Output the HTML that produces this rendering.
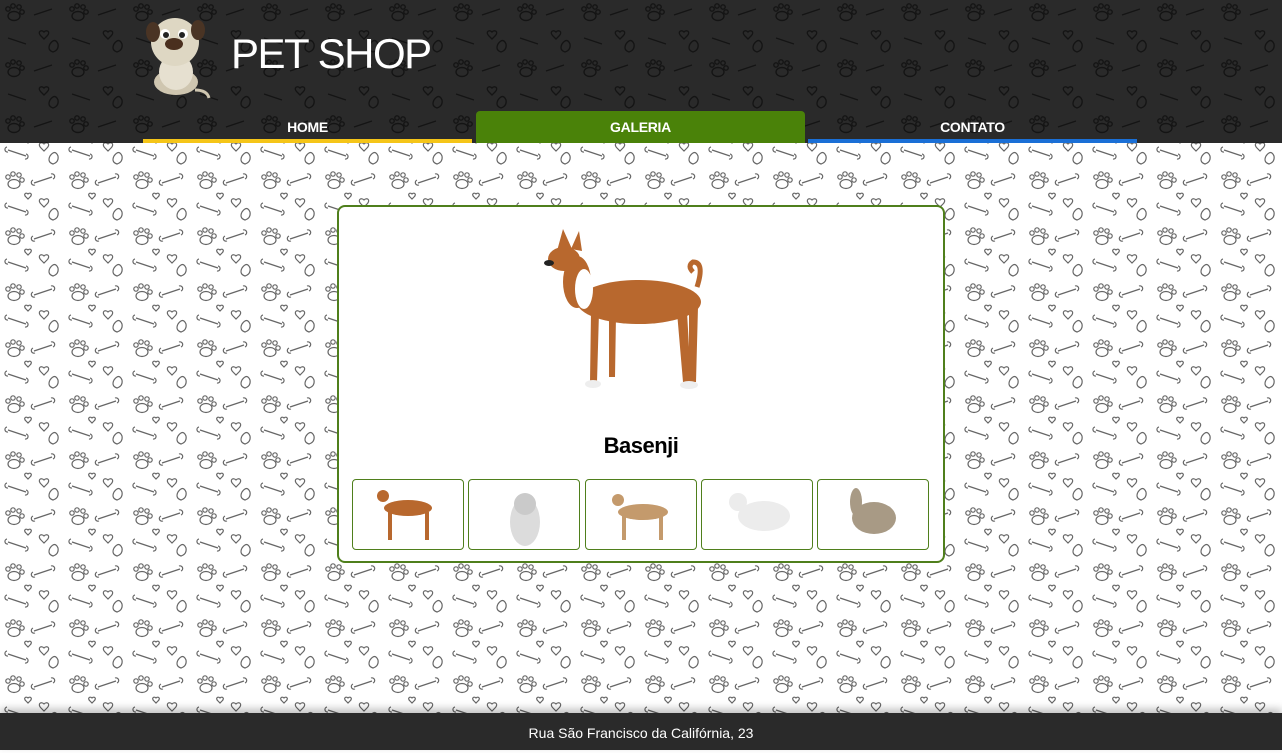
<!DOCTYPE html>
<html><head><meta charset="utf-8"><style>
*{margin:0;padding:0;box-sizing:border-box}
body{width:1282px;height:750px;overflow:hidden;position:relative;font-family:"Liberation Sans","DejaVu Sans",sans-serif;background:#fff}
.bg{position:absolute;left:0;top:0}
header{position:absolute;left:0;top:0;width:1282px;height:143px;background:#2a2a2a}
.title{position:absolute;left:231px;top:30px;color:#fff;font-size:42px;letter-spacing:-1.5px}
.tab{position:absolute;top:111px;height:32px;width:329px;color:#fff;font-weight:bold;font-size:14px;text-align:center;line-height:32px;letter-spacing:-0.3px}
.card{position:absolute;left:337px;top:205px;width:608px;height:358px;background:#fff;border:2px solid #4f7f1c;border-radius:8px}
.name{position:absolute;left:0;width:100%;top:226px;text-align:center;font-size:22px;font-weight:bold;color:#000;letter-spacing:-0.5px}
.th{position:absolute;top:272px;width:112px;height:71px;border:1px solid #4f7f1c;border-radius:4px;background:#fff;overflow:hidden}
footer{position:absolute;left:0;top:713px;width:1282px;height:37px;background:#2a2a2a;color:#fff;font-size:14px;text-align:center;line-height:40px;box-shadow:0 -4px 8px rgba(0,0,0,.25)}
</style></head><body>
<svg class="bg" width="1282" height="750"><defs>
<pattern id="p" width="64" height="56" patternUnits="userSpaceOnUse">
<g fill="none" stroke="#666" stroke-width="1.2">
<ellipse cx="14" cy="16" rx="6" ry="4.5"/><circle cx="8" cy="9" r="2.2"/><circle cx="13" cy="6" r="2.2"/><circle cx="19" cy="7" r="2.2"/><circle cx="22" cy="12" r="2.2"/>
<path d="M34 15 l18 -6 M33 12 a2.5 2.5 0 1 0 2 5 M51 6 a2.5 2.5 0 1 1 2 5"/>
<path d="M44 32 c-3-3-7 0-3 4 l3 3 3-3 c4-4 0-7-3-4z"/>
<path d="M8 38 l18 6 M7 35a2.5 2.5 0 1 0 1 5 M26 42a2.5 2.5 0 1 1 -1 5"/>
<path d="M50 44 q5-7 8 0 q1 6 -5 8 q-6-2 -3-8z"/>
<path d="M28 26 c-2-2-5 0-2 3 l2 2 2-2 c3-3 0-5-2-3z"/>
</g></pattern>
<pattern id="p2" width="64" height="56" patternUnits="userSpaceOnUse">
<g fill="none" stroke="#141414" stroke-width="1.4">
<ellipse cx="14" cy="16" rx="6" ry="4.5"/><circle cx="8" cy="9" r="2.2"/><circle cx="13" cy="6" r="2.2"/><circle cx="19" cy="7" r="2.2"/><circle cx="22" cy="12" r="2.2"/>
<path d="M34 15 l18 -6 M8 38 l18 6 M44 32 c-3-3-7 0-3 4 l3 3 3-3 c4-4 0-7-3-4z M50 44 q5-7 8 0 q1 6 -5 8 q-6-2 -3-8z"/>
</g></pattern></defs>
<rect width="1282" height="750" fill="url(#p)"/>
</svg>
<header>
<svg width="1282" height="143" style="position:absolute;left:0;top:0"><rect width="1282" height="143" fill="url(#p2)"/></svg>
<svg style="position:absolute;left:143px;top:10px" width="70" height="90">
<ellipse cx="33" cy="72" rx="22" ry="13" fill="#cfc6b0"/>
<ellipse cx="33" cy="62" rx="17" ry="18" fill="#e6e0d0"/>
<ellipse cx="32" cy="32" rx="24" ry="24" fill="#ded7c3"/>
<ellipse cx="10" cy="22" rx="7" ry="10" fill="#4a3424"/><ellipse cx="55" cy="20" rx="7" ry="10" fill="#4a3424"/>
<circle cx="22" cy="24" r="5" fill="#fff"/><circle cx="40" cy="24" r="5" fill="#fff"/>
<circle cx="23" cy="25" r="3" fill="#222"/><circle cx="39" cy="25" r="3" fill="#222"/>
<ellipse cx="31" cy="34" rx="9" ry="6" fill="#4a2f1e"/>
<path d="M52 80 q12 0 14 8" stroke="#cfc6b0" stroke-width="3" fill="none"/>
</svg>
<div class="title">PET SHOP</div>
<div class="tab" style="left:143px;border-bottom:4px solid #f5c518">HOME</div>
<div class="tab" style="left:476px;background:#4a8209;border-radius:4px 4px 0 0">GALERIA</div>
<div class="tab" style="left:808px;border-bottom:4px solid #1a6fd6">CONTATO</div>
</header>
<div class="card">
<svg style="position:absolute;left:190px;top:10px" width="220" height="190" viewBox="0 0 220 190">
<g fill="#b8682e">
<ellipse cx="110" cy="85" rx="62" ry="22"/>
<ellipse cx="48" cy="65" rx="14" ry="26"/>
<ellipse cx="35" cy="42" rx="16" ry="12"/>
<path d="M62 95 l8 0 -2 70 -7 0z M80 98 l7 0 -1 62 -6 0z M148 95 l10 0 4 70 -8 0z M160 90 l9 0 -2 75 -7 0z"/>
<path d="M28 34 l6-22 9 20z M42 32 l8-18 3 20z"/>
<path d="M168 70 q8-25 -4-25 q-6 4 0 10" stroke="#b8682e" stroke-width="5" fill="none"/>
</g>
<ellipse cx="55" cy="72" rx="9" ry="20" fill="#fff"/>
<ellipse cx="20" cy="46" rx="5" ry="3" fill="#222"/>
<ellipse cx="64" cy="167" rx="8" ry="4" fill="#eee"/><ellipse cx="160" cy="168" rx="9" ry="4" fill="#eee"/>
</svg>
<div class="name">Basenji</div>
<div class="th" style="left:13px"><svg width="112" height="71"><g fill="#b8682e"><ellipse cx="55" cy="28" rx="24" ry="8"/><ellipse cx="30" cy="16" rx="6" ry="6"/><rect x="35" y="32" width="4" height="28"/><rect x="72" y="32" width="4" height="28"/></g></svg></div>
<div class="th" style="left:129px"><svg width="112" height="71"><ellipse cx="56" cy="42" rx="15" ry="24" fill="#dcdcdc"/><circle cx="56" cy="24" r="11" fill="#cacaca"/></svg></div>
<div class="th" style="left:246px"><svg width="112" height="71"><g fill="#c49a6c"><ellipse cx="57" cy="32" rx="25" ry="8"/><ellipse cx="32" cy="20" rx="6" ry="6"/><rect x="36" y="36" width="4" height="24"/><rect x="73" y="36" width="4" height="24"/></g></svg></div>
<div class="th" style="left:362px"><svg width="112" height="71"><g fill="#ececec"><ellipse cx="62" cy="36" rx="26" ry="15"/><circle cx="36" cy="22" r="9"/></g></svg></div>
<div class="th" style="left:478px"><svg width="112" height="71"><g fill="#a89a85"><ellipse cx="56" cy="38" rx="22" ry="16"/><ellipse cx="38" cy="22" rx="6" ry="14"/></g></svg></div>
</div>
<footer>Rua São Francisco da Califórnia, 23</footer>
</body></html>
